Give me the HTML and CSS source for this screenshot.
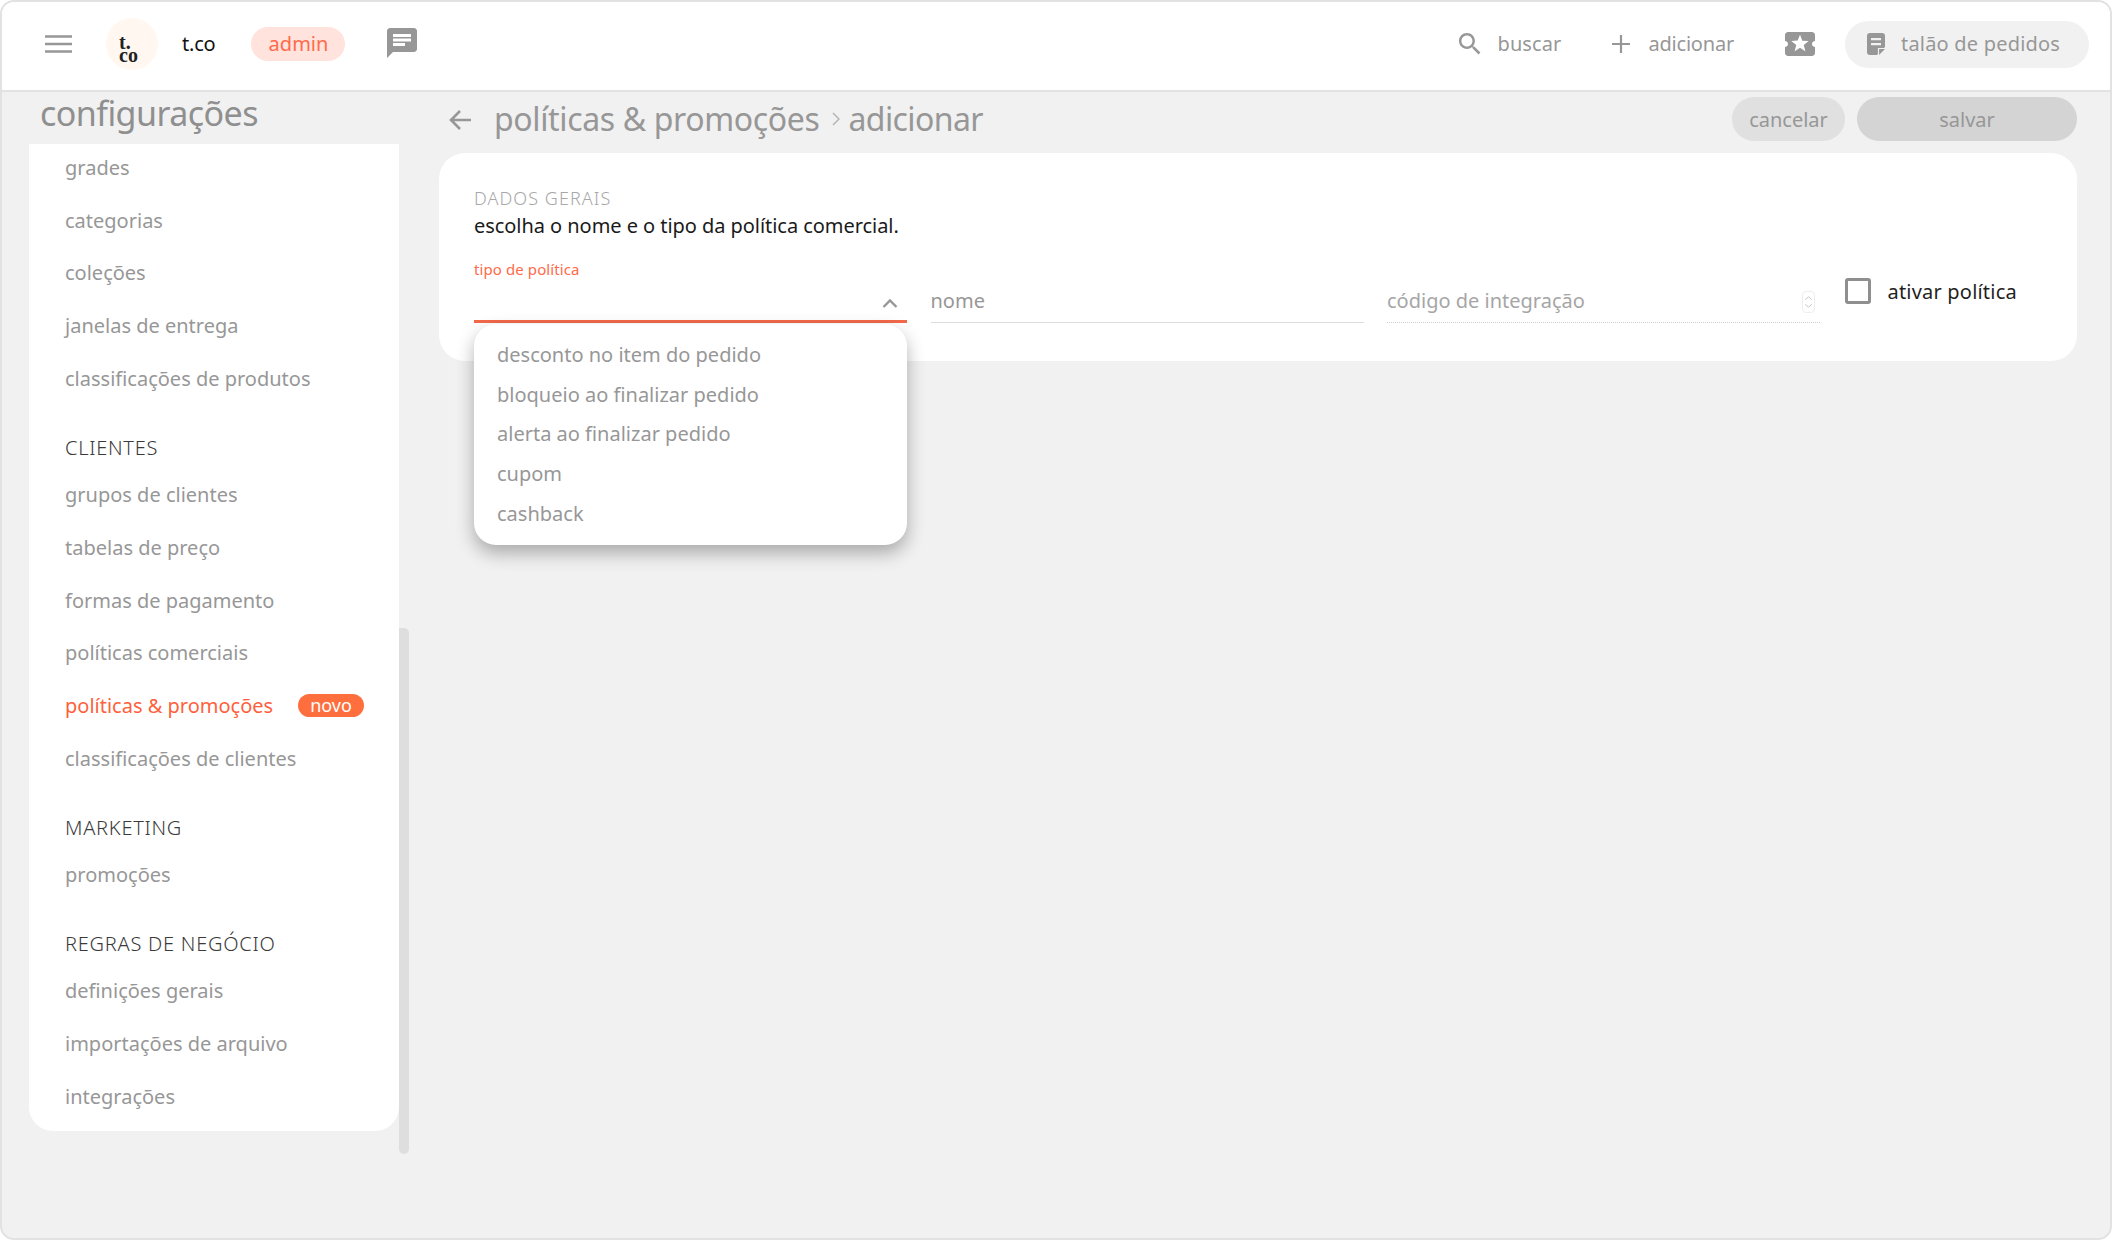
FILE: index.html
```html
<!DOCTYPE html>
<html lang="pt-BR">
<head>
<meta charset="utf-8">
<title>políticas &amp; promoções</title>
<link rel="stylesheet" href="styles.css">
</head>
<body>
<div class="frame">
  <header class="topbar">
    <div class="top-left">
      <svg class="ic-menu" viewBox="0 0 27 18"><path d="M0 1.5h27M0 9h27M0 16.500h27" stroke="#979797" stroke-width="2.600" fill="none"/></svg>
      <div class="logo"><span>t.</span><span>co</span></div>
      <span class="brand">t.co</span>
      <span class="role">admin</span>
      <svg class="ic-chat" viewBox="2 2 20 20"><path fill="#979797" d="M20 2H4c-1.100 0-1.990.9-1.990 2L2 22l4-4h14c1.100 0 2-.9 2-2V4c0-1.100-.9-2-2-2zM6 9h12v2H6V9zm8 5H6v-2h8v2zm4-6H6V6h12v2z"/></svg>
    </div>
    <div class="top-right">
      <div class="tool">
        <svg class="ic-search" viewBox="3 3 18 18"><path fill="#979797" d="M15.500 14h-.79l-.28-.27C15.410 12.590 16 11.110 16 9.500 16 5.910 13.090 3 9.500 3S3 5.910 3 9.500 5.910 16 9.500 16c1.610 0 3.090-.59 4.230-1.570l.27.28v.79l5 4.990L20.490 19l-4.990-5zm-6 0C7.010 14 5 11.990 5 9.500S7.010 5 9.500 5 14 7.010 14 9.500 11.990 14 9.500 14z"/></svg>
        <span class="top-text">buscar</span>
      </div>
      <div class="tool tool-add">
        <svg class="ic-plus" viewBox="0 0 18 18"><path d="M9 0v18M0 9h18" stroke="#979797" stroke-width="2.200" fill="none"/></svg>
        <span class="top-text">adicionar</span>
      </div>
      <svg class="ic-ticket" viewBox="2 4 20 16" preserveAspectRatio="none"><path fill="#979797" d="M20 12c0-1.100.9-2 2-2V6c0-1.100-.9-2-2-2H4c-1.100 0-1.990.9-1.990 2v4c1.100 0 1.990.9 1.990 2s-.89 2-2 2v4c0 1.100.9 2 2 2h16c1.100 0 2-.9 2-2v-4c-1.100 0-2-.9-2-2zm-4.420 4.800L12 14.500l-3.580 2.300 1.080-4.120-3.290-2.690 4.240-.25L12 5.800l1.540 3.950 4.240.25-3.290 2.690 1.090 4.110z"/></svg>
      <div class="order-pill">
        <svg class="ic-doc" viewBox="0 0 18 22"><path fill="#979797" fill-rule="evenodd" d="M3 0h12a3 3 0 0 1 3 3v11l-8 8H3a3 3 0 0 1-3-3V3a3 3 0 0 1 3-3zM4 5v2.200h10V5zm0 5v2.200h10V10z"/><path fill="#979797" d="M12 22v-6h6z"/><path d="M11.500 21.500v-6h6" fill="none" stroke="#f1f1f1" stroke-width="1.200"/></svg>
        <span class="top-text">talão de pedidos</span>
      </div>
    </div>
  </header>

  <div class="body">
    <aside class="side">
      <h2 class="side-title">configurações</h2>
      <div class="side-row">
        <nav class="panel">
          <div class="nav-list">
            <a class="item">grades</a>
            <a class="item">categorias</a>
            <a class="item">coleções</a>
            <a class="item">janelas de entrega</a>
            <a class="item">classificações de produtos</a>
            <div class="head">CLIENTES</div>
            <a class="item">grupos de clientes</a>
            <a class="item">tabelas de preço</a>
            <a class="item">formas de pagamento</a>
            <a class="item">políticas comerciais</a>
            <a class="item active"><span>políticas &amp; promoções</span><b class="badge">novo</b></a>
            <a class="item">classificações de clientes</a>
            <div class="head">MARKETING</div>
            <a class="item">promoções</a>
            <div class="head">REGRAS DE NEGÓCIO</div>
            <a class="item">definições gerais</a>
            <a class="item">importações de arquivo</a>
            <a class="item">integrações</a>
          </div>
        </nav>
        <div class="thumb"></div>
      </div>
    </aside>

    <main class="main">
      <div class="page-head">
        <div class="crumbs">
          <svg class="ic-back" viewBox="0 0 24 22"><path d="M23 11H3M12 2l-9 9 9 9" stroke="#979797" stroke-width="2.600" fill="none"/></svg>
          <h1 class="crumb">políticas &amp; promoções</h1>
          <svg class="ic-sep" viewBox="0 0 8 14"><path d="M1 1l6 6-6 6" stroke="#b5b5b5" stroke-width="1.500" fill="none"/></svg>
          <span class="crumb crumb-last">adicionar</span>
        </div>
        <div class="actions">
          <button class="btn btn-cancel">cancelar</button>
          <button class="btn btn-save">salvar</button>
        </div>
      </div>

      <section class="card">
        <div class="eyebrow">DADOS GERAIS</div>
        <p class="lead">escolha o nome e o tipo da política comercial.</p>
        <div class="fields">
          <div class="field field-select">
            <label class="float">tipo de política</label>
            <svg class="ic-chev" viewBox="0 0 16 10"><path d="M1.500 9L8 2.500 14.500 9" stroke="#979797" stroke-width="2.400" fill="none"/></svg>
            <ul class="menu">
              <li>desconto no item do pedido</li>
              <li>bloqueio ao finalizar pedido</li>
              <li>alerta ao finalizar pedido</li>
              <li>cupom</li>
              <li>cashback</li>
            </ul>
          </div>
          <div class="field field-name"><span class="ph">nome</span></div>
          <div class="field field-code">
            <span class="ph ph-light">código de integração</span>
            <span class="spin">
              <svg viewBox="0 0 10 6"><path d="M1.500 5L5 1.500 8.500 5" stroke="#bdbdbd" fill="none"/></svg>
              <svg viewBox="0 0 10 6"><path d="M1.500 1L5 4.500 8.500 1" stroke="#bdbdbd" fill="none"/></svg>
            </span>
          </div>
          <div class="check"><span class="box"></span><span class="check-label">ativar política</span></div>
        </div>
      </section>
    </main>
  </div>
</div>
</body>
</html>
```

FILE: styles.css
```css
* { box-sizing: border-box; }
html, body { margin: 0; padding: 0; background: #fff; }
body { font-family: "Noto Sans", "Open Sans", sans-serif; color: #979797; }
.frame {
  width: 2112px; height: 1240px; background: #f1f1f1;
  border: 2px solid #e2e2e2; border-radius: 14px; overflow: hidden;
  display: flex; flex-direction: column;
}
.topbar {
  height: 90px; flex: none; background: #fff; border-bottom: 2px solid #e2e2e2;
  display: flex; justify-content: space-between; align-items: center;
  padding: 0 21px 4px 43px;
}
.top-left, .top-right { display: flex; align-items: center; }
.top-text { margin-bottom: 2px; }
.ic-menu { width: 27px; height: 18px; flex: none; }
.logo {
  width: 52px; height: 52px; border-radius: 50%; background: #fff7f0; margin-left: 34px;
  display: flex; flex-direction: column; justify-content: center; padding: 10px 0 0 13px;
  font: 700 20px/13px "Liberation Serif", serif; color: #222;
}
.brand { margin: 0 0 2px 24px; color: #111; font-size: 20px; letter-spacing: -0.2px; }
.role {
  margin-left: 36px; width: 94px; height: 34px; border-radius: 17px; background: #ffe3dc;
  color: #ff6a4b; font-size: 20px; line-height: 34px; text-align: center;
}
.ic-chat { width: 30px; height: 30px; margin-left: 42px; margin-top: -2px; }
.tool { display: flex; align-items: center; font-size: 20px; letter-spacing: 0.1px; }
.tool-add { margin-left: 51px; letter-spacing: -0.2px; }
.ic-search { width: 22px; height: 22px; margin-right: 16px; }
.ic-plus { width: 18px; height: 18px; margin-right: 18px; }
.ic-ticket { width: 30px; height: 24px; margin-left: 51px; }
.order-pill {
  margin-left: 30px; width: 244px; height: 47px; border-radius: 24px; background: #f1f1f1;
  display: flex; align-items: center; padding-left: 22px; font-size: 20px; letter-spacing: 0.2px;
}
.ic-doc { width: 18px; height: 22px; margin-right: 16px; }

.body { flex: 1; display: flex; padding-left: 27px; padding-right: 33px; min-height: 0; }
.side { width: 380px; flex: none; }
.side-title {
  margin: 0; height: 52px; padding-left: 11px; font-size: 34px; line-height: 42px;
  font-weight: 400; color: #8f8f8f; letter-spacing: -0.55px; white-space: nowrap;
}
.side-row { display: flex; align-items: flex-start; }
.panel {
  width: 370px; height: 987px; background: #fff; overflow: hidden;
  border-radius: 0 0 24px 24px; padding-left: 36px; padding-right: 35px;
}
.nav-list { margin-top: -3px; }
.thumb { width: 10px; height: 526px; margin-top: 484px; background: #dedede; border-radius: 0 5px 5px 5px; }
.item {
  display: flex; align-items: center; justify-content: space-between;
  height: 52.800px; font-size: 20px; color: #979797; white-space: nowrap;
}
.head {
  height: 63.200px; padding-top: 23px; line-height: 40px; font-size: 20px;
  color: #3a3a3a; letter-spacing: 0.750px; font-weight: 300;
}
.active { color: #ff5f3c; }
.badge {
  width: 66px; height: 23px; border-radius: 12px; background: #ff6f3d; color: #fff;
  font-weight: 400; font-size: 18px; line-height: 23px; text-align: center;
}

.main { flex: 1; margin-left: 30px; min-width: 0; }
.page-head { display: flex; justify-content: space-between; padding-top: 5px; height: 61px; }
.crumbs { display: flex; align-items: center; height: 44px; }
.ic-back { width: 24px; height: 22px; margin-left: 9px; margin-top: 1px; }
.crumb { margin: 0 0 2px; font-size: 32px; font-weight: 400; color: #979797; letter-spacing: -0.36px; white-space: nowrap; }
h1.crumb { margin-left: 22px; }
.crumb-last { letter-spacing: -0.6px; }
.ic-sep { width: 8px; height: 14px; margin: 0 9px 0 12px; }
.actions { display: flex; gap: 12px; }
.btn {
  height: 44px; border: 0; border-radius: 22px; font: 400 20px "Noto Sans", sans-serif; color: #979797;
  padding: 0;
}
.btn-cancel { width: 113px; background: #e0e0e0; }
.btn-save { width: 220px; background: #d4d4d4; }

.card { height: 208px; background: #fff; border-radius: 26px; padding: 32px 35px 0; position: relative; }
.eyebrow { font-size: 18px; line-height: 26px; color: #a8a8a8; letter-spacing: 1.050px; font-weight: 300; }
.lead { margin: 1px 0 0; font-size: 20px; line-height: 28px; color: #1a1a1a; letter-spacing: -0.05px; }
.fields { display: flex; align-items: flex-start; gap: 23.500px; margin-top: 19px; }
.field { width: 433px; height: 64px; flex: none; position: relative; border-bottom: 1px solid #dcdcdc; }
.field-select { border-bottom: 3px solid #f2694a; }
.float { display: block; font-size: 15px; line-height: 20px; color: #ff6a4b; letter-spacing: 0.1px; }
.ic-chev { position: absolute; right: 9px; top: 39px; width: 16px; height: 10px; }
.menu {
  position: absolute; left: 0; top: 65px; width: 433px; height: 221px; margin: 0; padding: 11px 0 0 23px;
  list-style: none; background: #fff; border-radius: 22px; z-index: 5;
  box-shadow: 0 8px 18px rgba(0, 0, 0, .3);
}
.menu li { height: 39.700px; line-height: 39.700px; font-size: 20px; color: #979797; }
.ph { position: absolute; left: 0; top: 28px; font-size: 20px; line-height: 28px; color: #979797; }
.ph-light { color: #a6a6a6; }
.field-code { border-bottom: 1px dotted #d0d0d0; }
.spin {
  position: absolute; right: 5px; top: 32px; width: 13px; height: 22px;
  border: 1px solid #eee; border-radius: 4px; display: flex; flex-direction: column; align-items: center; justify-content: center; gap: 2px;
}
.spin svg { width: 9px; height: 6px; }
.check { display: flex; align-items: center; margin: 19px 0 0 1px; height: 26px; }
.box { width: 26px; height: 26px; border: 3px solid #8f8f8f; border-radius: 3px; }
.check-label { margin-left: 17px; font-size: 20px; color: #1f1f1f; white-space: nowrap; letter-spacing: 0.2px; }
```
